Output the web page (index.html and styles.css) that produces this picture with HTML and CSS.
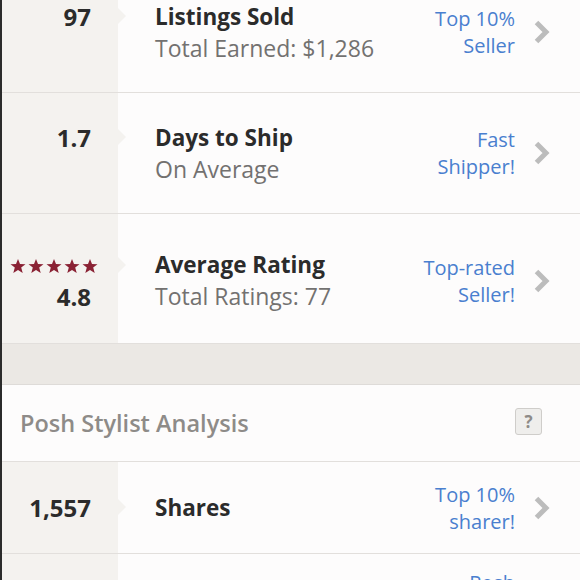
FILE: index.html
```html
<!DOCTYPE html>
<html lang="en">
<head>
    <meta charset="UTF-8">
    <meta name="viewport" content="width=device-width, initial-scale=1.0">
    <title>My Stats</title>
    <link rel="stylesheet" href="styles.css">
</head>
<body>

<div class="stats first">
    <div class="stat-row">
        <div class="stat-num two-line"><span class="num">97</span></div>
        <div class="stat-info">
            <div class="title">Listings Sold</div>
            <div class="sub">Total Earned: $1,286</div>
        </div>
        <div class="badge">Top 10%<br>Seller</div>
        <div class="chevron"><svg width="18" height="24" viewBox="0 0 18 24"><path d="M3.5 2.5 L13 12 L3.5 21.5" fill="none" stroke="#bcbcbc" stroke-width="5"/></svg></div>
    </div>

    <div class="stat-row">
        <div class="stat-num two-line"><span class="num">1.7</span></div>
        <div class="stat-info">
            <div class="title">Days to Ship</div>
            <div class="sub">On Average</div>
        </div>
        <div class="badge">Fast<br>Shipper!</div>
        <div class="chevron"><svg width="18" height="24" viewBox="0 0 18 24"><path d="M3.5 2.5 L13 12 L3.5 21.5" fill="none" stroke="#bcbcbc" stroke-width="5"/></svg></div>
    </div>

    <div class="stat-row tall">
        <div class="stat-num">
            <div class="stars">
                <svg width="88" height="16" viewBox="0 0 88 16">
                    <g fill="#8a2234">
                        <polygon points="8,1 10,6 15.5,6.2 11.2,9.6 12.7,15 8,11.9 3.3,15 4.8,9.6 0.5,6.2 6,6"/>
                        <polygon transform="translate(18,0)" points="8,1 10,6 15.5,6.2 11.2,9.6 12.7,15 8,11.9 3.3,15 4.8,9.6 0.5,6.2 6,6"/>
                        <polygon transform="translate(36,0)" points="8,1 10,6 15.5,6.2 11.2,9.6 12.7,15 8,11.9 3.3,15 4.8,9.6 0.5,6.2 6,6"/>
                        <polygon transform="translate(54,0)" points="8,1 10,6 15.5,6.2 11.2,9.6 12.7,15 8,11.9 3.3,15 4.8,9.6 0.5,6.2 6,6"/>
                        <polygon transform="translate(72,0)" points="8,1 10,6 15.5,6.2 11.2,9.6 12.7,15 8,11.9 3.3,15 4.8,9.6 0.5,6.2 6,6"/>
                    </g>
                </svg>
            </div>
            <span class="num">4.8</span>
        </div>
        <div class="stat-info">
            <div class="title">Average Rating</div>
            <div class="sub">Total Ratings: 77</div>
        </div>
        <div class="badge">Top-rated<br>Seller!</div>
        <div class="chevron"><svg width="18" height="24" viewBox="0 0 18 24"><path d="M3.5 2.5 L13 12 L3.5 21.5" fill="none" stroke="#bcbcbc" stroke-width="5"/></svg></div>
    </div>
</div>

<div class="spacer"></div>

<div class="section-head">
    <span class="section-title">Posh Stylist Analysis</span>
    <span class="help">?</span>
</div>

<div class="stats">
    <div class="stat-row short">
        <div class="stat-num"><span class="num">1,557</span></div>
        <div class="stat-info">
            <div class="title">Shares</div>
        </div>
        <div class="badge">Top 10%<br>sharer!</div>
        <div class="chevron"><svg width="18" height="24" viewBox="0 0 18 24"><path d="M3.5 2.5 L13 12 L3.5 21.5" fill="none" stroke="#bcbcbc" stroke-width="5"/></svg></div>
    </div>
    <div class="stat-row last">
        <div class="stat-num"><span class="num">312</span></div>
        <div class="stat-info">
            <div class="title">Parties</div>
        </div>
        <div class="badge">Posh<br>Party<br>Host</div>
        <div class="chevron"></div>
    </div>
</div>

</body>
</html>
```

FILE: styles.css
```css
body {
    margin: 0;
    font-family: "Open Sans", Lato, sans-serif;
    background-color: #fdfcfc;
    border-left: 2px solid #2b2b2b;
    overflow: hidden;
    height: 580px;
}
.stats {
    background-color: #fdfcfc;
}
.stats.first {
    margin-top: -28px;
}
.stat-row {
    display: flex;
    align-items: center;
    height: 120px;
    border-bottom: 1px solid #e2dfdc;
    background: linear-gradient(to right, #f4f2ef 116px, #fdfcfc 116px);
}
.stat-row.tall {
    height: 130px;
    padding-top: 4px;
    box-sizing: border-box;
}
.stat-row.short {
    height: 91px;
}
.stat-row.last {
    height: 110px;
}
.stat-num {
    position: relative;
    width: 116px;
    padding-right: 27px;
    box-sizing: border-box;
    text-align: right;
}
.stat-num.two-line {
    padding-bottom: 32px;
}
.stat-num::after {
    content: "";
    position: absolute;
    right: -8px;
    top: 7px;
    border-top: 8px solid transparent;
    border-bottom: 8px solid transparent;
    border-left: 8px solid #f4f2ef;
}
.num {
    display: block;
    font-size: 24px;
    font-weight: 700;
    color: #2b2b2b;
    line-height: 31px;
}
.stars {
    height: 31px;
    margin-right: -7px;
    padding-top: 8px;
    box-sizing: border-box;
    line-height: 0;
}
.stat-info {
    flex: 1;
    padding-left: 37px;
}
.title {
    font-size: 22.5px;
    font-weight: 700;
    color: #2b2b2b;
    line-height: 31px;
}
.sub {
    font-size: 23px;
    color: #737170;
    line-height: 32px;
}
.badge {
    font-size: 20px;
    color: #4a7fcf;
    text-align: right;
    line-height: 27px;
}
.chevron {
    width: 65px;
    padding-left: 18px;
    box-sizing: border-box;
    line-height: 0;
}
.spacer {
    height: 40px;
    background-color: #ebe8e4;
    border-bottom: 1px solid #dedbd8;
}
.section-head {
    display: flex;
    align-items: center;
    justify-content: space-between;
    height: 76px;
    padding: 0 38px 0 18px;
    border-bottom: 1px solid #e2dfdc;
    background-color: #fdfcfc;
}
.section-title {
    font-size: 23.5px;
    color: #8e8b88;
    font-weight: 600;
}
.help {
    width: 25px;
    height: 25px;
    border: 1px solid #cfcdca;
    border-radius: 3px;
    background-color: #efeeec;
    color: #8e8b88;
    font-weight: 700;
    font-size: 17px;
    text-align: center;
    line-height: 25px;
    margin-top: -4px;
}
```
